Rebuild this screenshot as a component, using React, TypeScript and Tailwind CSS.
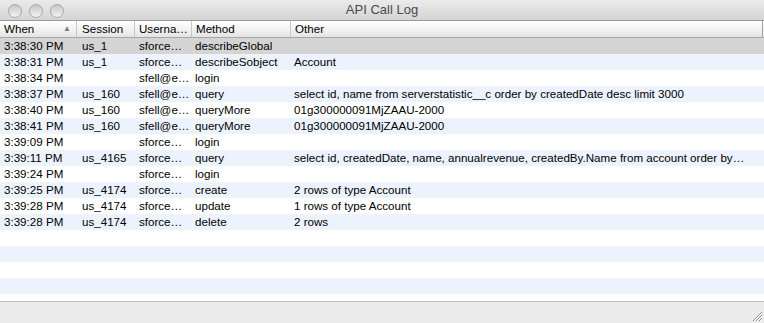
type Row = {
  when: string;
  session: string;
  user: string;
  method: string;
  other: string;
};

const rows: Row[] = [
  { when: "3:38:30 PM", session: "us_1", user: "sforce…", method: "describeGlobal", other: "" },
  { when: "3:38:31 PM", session: "us_1", user: "sforce…", method: "describeSobject", other: "Account" },
  { when: "3:38:34 PM", session: "", user: "sfell@e…", method: "login", other: "" },
  {
    when: "3:38:37 PM",
    session: "us_160",
    user: "sfell@e…",
    method: "query",
    other: "select id, name from serverstatistic__c order by createdDate desc limit 3000",
  },
  { when: "3:38:40 PM", session: "us_160", user: "sfell@e…", method: "queryMore", other: "01g300000091MjZAAU-2000" },
  { when: "3:38:41 PM", session: "us_160", user: "sfell@e…", method: "queryMore", other: "01g300000091MjZAAU-2000" },
  { when: "3:39:09 PM", session: "", user: "sforce…", method: "login", other: "" },
  {
    when: "3:39:11 PM",
    session: "us_4165",
    user: "sforce…",
    method: "query",
    other: "select id, createdDate, name, annualrevenue, createdBy.Name from account order by…",
  },
  { when: "3:39:24 PM", session: "", user: "sforce…", method: "login", other: "" },
  { when: "3:39:25 PM", session: "us_4174", user: "sforce…", method: "create", other: "2 rows of type Account" },
  { when: "3:39:28 PM", session: "us_4174", user: "sforce…", method: "update", other: "1 rows of type Account" },
  { when: "3:39:28 PM", session: "us_4174", user: "sforce…", method: "delete", other: "2 rows" },
];

const Light = () => (
  <div className="w-[14px] h-[14px] rounded-full border border-[#a8a8a8] bg-gradient-to-b from-[#c6c6c6] to-[#f4f4f4]" />
);

const App = () => {
  const fillers = [0, 1, 2, 3, 4];

  return (
    <div
      className="w-[764px] h-[323px] flex flex-col bg-white overflow-hidden text-[11.6px] text-black"
      style={{ fontFamily: '"Lucida Grande", "Liberation Sans", sans-serif' }}
    >
      {/* title bar */}
      <div className="relative h-[21px] shrink-0 flex items-center bg-gradient-to-b from-[#ebebeb] to-[#d4d4d4] border-b border-[#9a9a9a]">
        <div className="flex gap-[7px] pl-[8px] pt-[1px]">
          <Light />
          <Light />
          <Light />
        </div>
        <div className="absolute inset-0 flex items-center justify-center text-[13px] text-[#4a4a4a]">
          API Call Log
        </div>
      </div>

      {/* header */}
      <div className="h-[17px] shrink-0 flex bg-gradient-to-b from-white via-[#f3f3f3] to-[#e4e4e4] border-b border-[#a6a6a6] leading-[16px]">
        <div className="w-[77px] pl-[4px] flex items-center justify-between pr-[5px] border-r border-[#c8c8c8]">
          <span>When</span>
          <span className="text-[8px] text-[#7a7a7a]">▲</span>
        </div>
        <div className="w-[58px] pl-[5px] border-r border-[#c8c8c8]">Session</div>
        <div className="w-[57px] pl-[4px] border-r border-[#c8c8c8]">Userna…</div>
        <div className="w-[99px] pl-[4px] border-r border-[#c8c8c8]">Method</div>
        <div className="w-[472px] pl-[4px] border-r border-[#a6a6a6]">Other</div>
      </div>

      {/* rows */}
      <div className="flex-1 flex flex-col overflow-hidden">
        {rows.map((r, i) => (
          <div
            key={i}
            className={
              "h-[16px] shrink-0 flex leading-[16px] whitespace-nowrap " +
              (i === 0 ? "bg-[#d4d4d4]" : i % 2 === 1 ? "bg-[#edf3fe]" : "bg-white")
            }
          >
            <div className="w-[77px] pl-[4px]">{r.when}</div>
            <div className="w-[58px] pl-[5px]">{r.session}</div>
            <div className="w-[57px] pl-[4px]">{r.user}</div>
            <div className="w-[99px] pl-[3px]">{r.method}</div>
            <div className="flex-1 pl-[3px] overflow-hidden">{r.other}</div>
          </div>
        ))}
        {fillers.map((f) => (
          <div
            key={"f" + f}
            className={"h-[16px] shrink-0 " + ((rows.length + f) % 2 === 1 ? "bg-[#edf3fe]" : "bg-white")}
          />
        ))}
      </div>

      {/* status bar */}
      <div className="relative h-[22px] shrink-0 bg-[#ebebeb] border-t border-[#bdbdbd]">
        <svg className="absolute right-[1px] bottom-[1px]" width="11" height="11" viewBox="0 0 11 11">
          <path d="M1 10 L10 1 M4 10 L10 4 M7 10 L10 7" stroke="#8a8a8a" strokeWidth="1" />
          <path d="M2 10 L10 2 M5 10 L10 5 M8 10 L10 8" stroke="#ffffff" strokeWidth="1" />
        </svg>
      </div>
    </div>
  );
};

export default App;
